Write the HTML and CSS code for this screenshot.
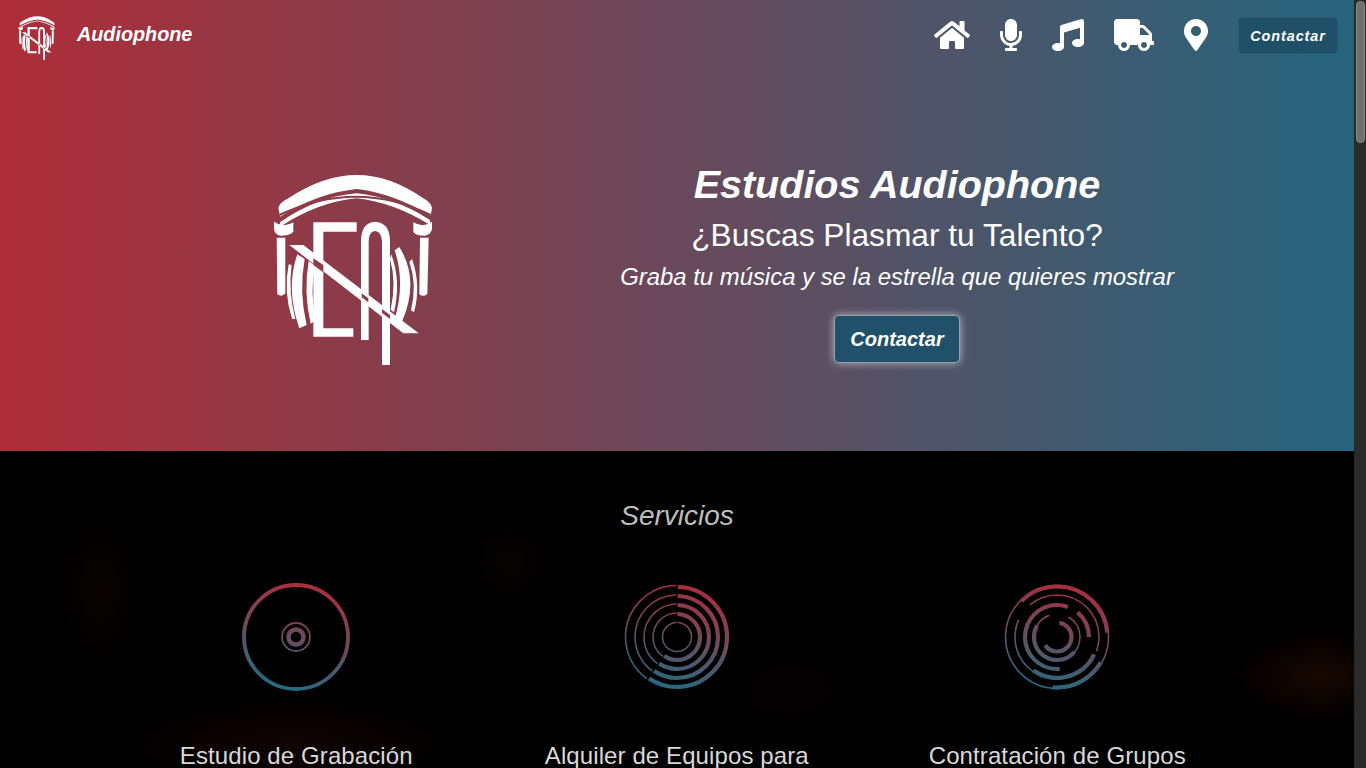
FILE: index.html
```html
<!DOCTYPE html>
<html lang="es">
<head>
  <meta charset="utf-8">
  <title>Estudios Audiophone</title>
  <link rel="stylesheet" href="styles.css">
</head>
<body>
  <svg class="defs" width="0" height="0">
    <defs>
      <mask id="logoCuts" maskUnits="userSpaceOnUse" x="0" y="0" width="570" height="630">
        <rect width="570" height="630" fill="#fff"/>
        <polygon points="160,280 190,300 190,322 160,300" fill="#000"/>
        <polygon points="305,385 325,400 325,412 305,397" fill="#000"/>
        <polygon points="366,432 390,450 390,462 366,444" fill="#000"/>
        <path d="M58 150 Q290 40 512 150" fill="none" stroke="#000" stroke-width="6"/>
      </mask>
      <symbol id="logo" viewBox="0 0 570 630">
        <g fill="#fff" mask="url(#logoCuts)">
          <path d="M55 128 Q60 112 85 100 Q190 30 290 30 Q390 30 490 100 Q512 112 516 128 L512 152 Q400 85 290 72 Q170 85 60 155 Z"/>
          <path d="M60 172 Q170 95 290 85 Q400 95 510 165 L510 180 Q400 112 290 100 Q170 112 60 186 Z"/>
          <path d="M42 170 Q70 190 100 172 L100 200 Q90 212 60 212 Q42 208 42 190 Z"/>
          <path d="M460 172 Q490 190 516 170 L516 192 Q514 208 495 212 Q465 212 460 200 Z"/>
          <path d="M50 218 H76 V385 Q66 398 52 388 Z"/>
          <path d="M480 218 H506 L502 386 Q490 398 478 388 Z"/>
          <path d="M160 172 H290 V200 H190 V490 H280 V515 H160 Z"/>
          <path d="M303 525 V225 Q305 172 345 170 Q388 172 390 225 V600 H366 V230 Q364 198 345 198 Q327 198 326 230 V525 Z"/>
          <polygon points="88,240 130,240 476,505 430,505"/>
          <path d="M112 268 Q76 370 118 490 L140 480 Q116 380 134 282 Z"/>
          <path d="M86 298 Q70 380 96 462 L106 462 Q84 380 95 300 Z"/>
          <path d="M146 288 Q130 380 152 476 L168 466 Q148 380 166 302 Z"/>
          <path d="M418 246 Q480 345 426 470 L405 460 Q436 350 404 256 Z"/>
          <path d="M456 282 Q484 360 462 442 L453 436 Q472 360 448 290 Z"/>
          <path d="M394 268 Q424 350 402 442 L392 434 Q410 350 390 282 Z"/>
        </g>
      </symbol>
      <linearGradient id="ringFill" gradientUnits="userSpaceOnUse" x1="70" y1="5" x2="45" y2="105">
        <stop offset="0" stop-color="#a92e3e"/>
        <stop offset="0.5" stop-color="#6c4a5c"/>
        <stop offset="1" stop-color="#276a80"/>
      </linearGradient>
    </defs>
  </svg>

  <div class="window">
    <main class="page">
      <header class="hero">
        <nav class="topbar">
          <div class="brand">
            <svg class="brand-logo"><use href="#logo"/></svg>
            <a class="brand-name" href="#">Audiophone</a>
          </div>
          <ul class="nav-icons">
            <li><svg class="icon-home" viewBox="0 0 576 512"><path d="M280.37 148.26L96 300.11V464a16 16 0 0 0 16 16l112.06-.29a16 16 0 0 0 15.92-16V368a16 16 0 0 1 16-16h64a16 16 0 0 1 16 16v95.64a16 16 0 0 0 16 16.05L464 480a16 16 0 0 0 16-16V300L295.67 148.26a12.19 12.19 0 0 0-15.3 0zM571.6 251.47L488 182.56V44.05a12 12 0 0 0-12-12h-56a12 12 0 0 0-12 12v72.61L318.47 43a48 48 0 0 0-61 0L4.34 251.47a12 12 0 0 0-1.6 16.9l25.5 31A12 12 0 0 0 45.15 301l235.22-193.74a12.19 12.19 0 0 1 15.3 0L530.9 301a12 12 0 0 0 16.9-1.6l25.5-31a12 12 0 0 0-1.7-16.93z"/></svg></li>
            <li><svg class="icon-mic" viewBox="0 0 352 512"><path d="M176 352c53.02 0 96-42.98 96-96V96c0-53.02-42.98-96-96-96S80 42.98 80 96v160c0 53.02 42.98 96 96 96zm160-160h-16c-8.84 0-16 7.16-16 16v48c0 74.8-64.49 134.82-140.79 127.38C96.71 376.89 48 317.11 48 250.3V208c0-8.84-7.16-16-16-16H16c-8.84 0-16 7.16-16 16v40.16c0 89.64 63.97 169.55 152 181.69V464H96c-8.84 0-16 7.16-16 16v16c0 8.84 7.16 16 16 16h160c8.84 0 16-7.16 16-16v-16c0-8.84-7.16-16-16-16h-56v-33.77C285.71 418.47 352 344.9 352 256v-48c0-8.84-7.16-16-16-16z"/></svg></li>
            <li><svg class="icon-music" viewBox="0 0 512 512"><path d="M470.38 1.51L150.41 96A32 32 0 0 0 128 126.51v261.41A139 139 0 0 0 96 384c-53 0-96 28.66-96 64s43 64 96 64 96-28.66 96-64V214.32l256-75v184.61a138.4 138.4 0 0 0-32-3.93c-53 0-96 28.66-96 64s43 64 96 64 96-28.65 96-64V32a32 32 0 0 0-41.62-30.49z"/></svg></li>
            <li><svg class="icon-truck" viewBox="0 0 640 512"><path d="M624 352h-16V243.9c0-12.7-5.1-24.9-14.1-33.9L494 110.1c-9-9-21.2-14.1-33.9-14.1H416V48c0-26.5-21.5-48-48-48H48C21.5 0 0 21.5 0 48v320c0 26.5 21.5 48 48 48h16c0 53 43 96 96 96s96-43 96-96h128c0 53 43 96 96 96s96-43 96-96h48c8.8 0 16-7.2 16-16v-32c0-8.8-7.2-16-16-16zM160 464c-26.5 0-48-21.5-48-48s21.5-48 48-48 48 21.5 48 48-21.5 48-48 48zm320 0c-26.5 0-48-21.5-48-48s21.5-48 48-48 48 21.5 48 48-21.5 48-48 48zm80-208H416V144h44.1l99.9 99.9V256z"/></svg></li>
            <li><svg class="icon-pin" viewBox="0 0 384 512"><path d="M172.268 501.67C26.97 291.031 0 269.413 0 192 0 85.961 85.961 0 192 0s192 85.961 192 192c0 77.413-26.97 99.031-172.268 309.67-9.535 13.774-29.93 13.773-39.464 0zM192 272c44.183 0 80-35.817 80-80s-35.817-80-80-80-80 35.817-80 80 35.817 80 80 80z"/></svg></li>
          </ul>
          <a class="nav-button" href="#">Contactar</a>
        </nav>

        <div class="hero-body">
          <div class="hero-logo">
            <svg class="big-logo"><use href="#logo"/></svg>
          </div>
          <div class="hero-text">
            <h1>Estudios Audiophone</h1>
            <h2>¿Buscas Plasmar tu Talento?</h2>
            <p>Graba tu música y se la estrella que quieres mostrar</p>
            <a class="hero-button" href="#">Contactar</a>
          </div>
        </div>
      </header>

      <section class="services">
        <h3>Servicios</h3>
        <div class="service-grid">
          <div class="service">
            <svg class="ring-icon" viewBox="0 0 110 110">
              <circle cx="55" cy="55" r="52" stroke-width="3.8"/>
              <circle cx="55" cy="55" r="14" stroke-width="1.8"/>
              <circle cx="55" cy="55" r="7.5" stroke-width="4.5"/>
            </svg>
            <h4>Estudio de Grabación</h4>
          </div>
          <div class="service">
            <svg class="ring-icon" viewBox="0 0 110 110">
              <g class="thick">
                <circle cx="55" cy="55" r="50" pathLength="360" stroke-dasharray="213 147" stroke-dashoffset="-271"/>
                <circle cx="55" cy="55" r="41" pathLength="360" stroke-dasharray="213 147" stroke-dashoffset="-271"/>
                <circle cx="55" cy="55" r="32" pathLength="360" stroke-dasharray="213 147" stroke-dashoffset="-271"/>
                <circle cx="55" cy="55" r="23" pathLength="360" stroke-dasharray="213 147" stroke-dashoffset="-271"/>
              </g>
              <g class="thin">
                <circle cx="55" cy="55" r="51.5" pathLength="360" stroke-dasharray="143 217" stroke-dashoffset="-126"/>
                <circle cx="55" cy="55" r="42" pathLength="360" stroke-dasharray="143 217" stroke-dashoffset="-126"/>
                <circle cx="55" cy="55" r="33" pathLength="360" stroke-dasharray="143 217" stroke-dashoffset="-126"/>
                <circle cx="55" cy="55" r="24" pathLength="360" stroke-dasharray="143 217" stroke-dashoffset="-126"/>
                <circle cx="55" cy="55" r="14.5" pathLength="360" stroke-dasharray="356 4" stroke-dashoffset="-272"/>
              </g>
            </svg>
            <h4>Alquiler de Equipos para</h4>
          </div>
          <div class="service">
            <svg class="ring-icon" viewBox="0 0 110 110">
              <g class="thin">
                <circle cx="55" cy="55" r="51.5"/>
                <circle cx="55" cy="55" r="42" pathLength="360" stroke-dasharray="150 14 170 26" stroke-dashoffset="-230"/>
                <circle cx="55" cy="55" r="23" pathLength="360" stroke-dasharray="120 40 150 50" stroke-dashoffset="-300"/>
              </g>
              <g class="thick">
                <circle cx="55" cy="55" r="50.5" pathLength="360" stroke-dasharray="130 230" stroke-dashoffset="-225"/>
                <circle cx="55" cy="55" r="50.5" pathLength="360" stroke-dasharray="65 295" stroke-dashoffset="-30"/>
                <circle cx="55" cy="55" r="41" pathLength="360" stroke-dasharray="100 260" stroke-dashoffset="-25"/>
                <circle cx="55" cy="55" r="32" pathLength="360" stroke-dasharray="205 20 50 85" stroke-dashoffset="-85"/>
                <circle cx="55" cy="55" r="23" pathLength="360" stroke-dasharray="170 190" stroke-dashoffset="-40"/>
                <circle cx="55" cy="55" r="14.5" pathLength="360" stroke-dasharray="225 135" stroke-dashoffset="-280"/>
              </g>
            </svg>
            <h4>Contratación de Grupos</h4>
          </div>
        </div>
      </section>
    </main>

    <div class="scrollbar"><div class="scroll-thumb"></div></div>
  </div>
</body>
</html>
```

FILE: styles.css
```css
* {
  box-sizing: border-box;
}

html,
body {
  height: 100%;
  margin: 0;
  overflow: hidden;
}

body {
  background: #000;
  font-family: "Liberation Sans", Arial, sans-serif;
  color: #fff;
}

a {
  color: inherit;
  text-decoration: none;
}

.defs {
  display: block;
  height: 0;
}

.window {
  display: flex;
  height: 100vh;
}

.page {
  flex: 1;
  min-width: 0;
  overflow: hidden;
}

/* barra de rolagem */
.scrollbar {
  width: 12px;
  padding: 1px 1px 0 2px;
  background: #2a2a2a;
}

.scroll-thumb {
  height: 142px;
  background: #6f6f6f;
  border: 1px solid #8c8c8c;
  border-radius: 5px;
}

.hero {
  height: 451px;
  background: linear-gradient(90deg, #ae2d38 0%, #25657d 100%);
}

.topbar {
  display: flex;
  align-items: center;
  height: 70px;
  padding: 0 16px 0 15px;
}

.brand {
  display: flex;
  align-items: center;
  flex: 1;
}

.brand-logo {
  width: 44px;
  height: 48px;
  margin-top: 5px;
}

.brand-name {
  margin: 0 0 2px 18px;
  font-size: 19.8px;
  font-weight: bold;
  font-style: italic;
}

.nav-icons {
  display: flex;
  align-items: center;
  gap: 30px;
  margin: 0 30px 0 0;
  padding: 0;
  list-style: none;
}

.nav-icons li {
  display: flex;
}

.nav-icons svg {
  display: block;
  height: 32px;
  fill: #fff;
}

.icon-home {
  width: 36px;
}

.icon-mic {
  width: 22px;
}

.icon-music {
  width: 32px;
}

.icon-truck {
  width: 40px;
}

.icon-pin {
  width: 24px;
}

.nav-button {
  width: 100px;
  height: 37px;
  line-height: 37px;
  text-align: center;
  font-size: 14.4px;
  font-weight: bold;
  font-style: italic;
  letter-spacing: 0.95px;
  background: #1f5067;
  border: 1px solid #2c5c72;
  border-radius: 4px;
}

.hero-body {
  display: grid;
  grid-template-columns: 436px 1fr;
  align-items: center;
  height: 381px;
  padding: 0 131px 0 135px;
}

.hero-logo {
  display: flex;
  justify-content: center;
  padding: 18px 0 0 4px;
}

.big-logo {
  width: 190px;
  height: 210px;
}

.hero-text {
  text-align: center;
  padding-top: 2px;
}

.hero-text h1 {
  margin: 0;
  font-size: 39.5px;
  line-height: 48px;
  font-style: italic;
  font-weight: bold;
}

.hero-text h2 {
  margin: 8px 0 0;
  font-size: 31.7px;
  line-height: 38px;
  font-weight: normal;
}

.hero-text p {
  margin: 9px 0 0;
  font-size: 23.9px;
  line-height: 28px;
  font-style: italic;
}

.hero-button {
  display: inline-block;
  width: 126px;
  height: 48px;
  margin-top: 24px;
  line-height: 47px;
  font-size: 20px;
  font-weight: bold;
  font-style: italic;
  background: #20506a;
  border: 1px solid #8fa3b5;
  border-radius: 5px;
  box-shadow: 0 0 9px rgba(255, 255, 255, 0.6);
}

.services {
  height: 317px;
  padding-top: 46px;
  text-align: center;
  background:
    radial-gradient(ellipse 45px 80px at 100px 140px, rgba(40, 18, 6, 0.22), transparent),
    radial-gradient(ellipse 40px 45px at 510px 110px, rgba(30, 15, 10, 0.25), transparent),
    radial-gradient(ellipse 90px 45px at 1320px 225px, rgba(60, 20, 0, 0.4), transparent),
    radial-gradient(ellipse 170px 50px at 290px 295px, rgba(50, 10, 12, 0.35), transparent),
    radial-gradient(ellipse 80px 50px at 790px 240px, rgba(25, 10, 10, 0.2), transparent),
    #000;
}

.services h3 {
  margin: 0;
  font-size: 28px;
  line-height: 38px;
  font-weight: normal;
  font-style: italic;
  color: #bdbdbd;
}

.service-grid {
  display: grid;
  grid-template-columns: repeat(3, 380.5px);
  margin-top: 47px;
  padding-left: 106px;
}

.ring-icon {
  display: block;
  width: 110px;
  height: 110px;
  margin: 0 auto;
  fill: none;
  stroke: url(#ringFill);
}

.thick circle {
  stroke-width: 4.2;
}

.thin circle {
  stroke-width: 1.6;
}

.service h4 {
  margin: 50px 0 0;
  font-size: 24px;
  line-height: 28px;
  font-weight: normal;
  letter-spacing: 0.1px;
  color: #d8d8d8;
}
```
